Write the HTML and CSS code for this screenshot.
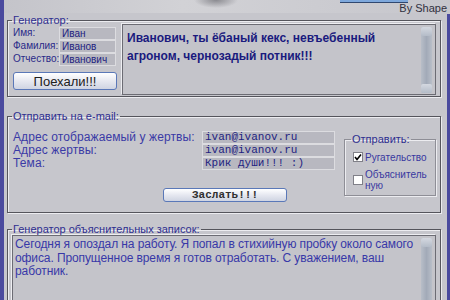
FILE: index.html
```html
<!DOCTYPE html>
<html lang="ru">
<head>
    <meta charset="UTF-8">
    <title>Генератор</title>
    <link rel="stylesheet" href="styles.css">
</head>
<body>
<div class="window">

    <!-- Header strip -->
    <div class="top">
        <div class="tab"></div>
        <div class="by">By Shape</div>
    </div>

    <div class="main">

        <!-- Name generator -->
        <fieldset class="group gen">
            <legend>Генератор:</legend>
            <div class="gen-body">
                <div class="gen-left">
                    <div class="fields">
                        <span class="small-label">Имя:</span><div class="input">Иван</div>
                        <span class="small-label">Фамилия:</span><div class="input">Иванов</div>
                        <span class="small-label">Отчество:</span><div class="input">Иванович</div>
                    </div>
                    <button class="btn btn-go">Поехали!!!</button>
                </div>
                <div class="memo">
                    <div class="memo-text bold-text">Иванович, ты ёбаный кекс, невъебенный<br>агроном, чернозадый потник!!!</div>
                    <div class="scroll"><span class="arrow"></span><span class="arrow"></span></div>
                </div>
            </div>
        </fieldset>

        <!-- Send by e-mail -->
        <fieldset class="group mail">
            <legend>Отправить на e-mail:</legend>
            <div class="mail-body">
                <div class="mail-left">
                    <div class="mail-fields">
                        <span class="big-label">Адрес отображаемый у жертвы:</span><div class="input mono">ivan@ivanov.ru</div>
                        <span class="big-label">Адрес жертвы:</span><div class="input mono">ivan@ivanov.ru</div>
                        <span class="big-label">Тема:</span><div class="input mono">Крик души!!! :)</div>
                    </div>
                    <button class="btn btn-send">Заслать!!!</button>
                </div>
                <fieldset class="group sub">
                    <legend>Отправить:</legend>
                    <div class="opt first">
                        <span class="box"><svg width="8" height="8" viewBox="0 0 8 8"><path d="M1 4 L3 6.5 L7 1.5" fill="none" stroke="#000" stroke-width="1.6"/></svg></span>
                        <span>Ругательство</span>
                    </div>
                    <div class="opt">
                        <span class="box"></span>
                        <span>Объяснитель<br>ную</span>
                    </div>
                </fieldset>
            </div>
        </fieldset>

        <!-- Excuse note generator -->
        <fieldset class="group notes">
            <legend>Генератор объяснительных записок:</legend>
            <div class="memo memo-notes">
                <div class="memo-text notes-text">Сегодня я опоздал на работу. Я попал в стихийную пробку около самого<br>офиса. Пропущенное время я готов отработать. С уважением, ваш<br>работник.</div>
                <div class="scroll"><span class="arrow"></span><span class="arrow"></span></div>
            </div>
        </fieldset>

    </div>
</div>
</body>
</html>
```

FILE: styles.css
```css
/* Page */
body {
    margin: 0;
    background-color: #c6c6cc;
    font-family: "Liberation Sans", Arial, sans-serif;
}

/* Window frame */
.window {
    width: 450px;
    height: 300px;
    box-sizing: border-box;
    border-left: 4px solid #4a4a9e;
    overflow: hidden;
}

/* Header strip */
.top {
    height: 13px;
    background: radial-gradient(ellipse 22px 8px at 212px 0, #8a8a90, transparent),
                linear-gradient(90deg, #c4c4ca, #d2d2d6 40%, #c6c6cc);
}

.tab {
    width: 68px;
    height: 2px;
    margin-left: 336px;
    background-color: #7ea8dc;
    border-bottom: 1px solid #304870;
}

.by {
    padding-right: 3px;
    font-size: 11px;
    line-height: 10px;
    color: #303040;
    text-align: right;
}

.main {
    border-right: 3px solid #4a4a9e;
    height: 287px;
}

/* Group boxes */
.group {
    margin: 0 6px 0 3px;
    padding: 0 4px;
    border: 1px solid #55555c;
    box-shadow: inset 1px 1px 0 #ececf0, 1px 1px 0 #ececf0;
    min-width: 0;
}

.group legend {
    padding: 0 1px;
    font-size: 11px;
    line-height: 12px;
    color: #2e2e90;
}

/* Generator */
.gen {
    margin-top: 1px;
    padding: 1px 4px 1px;
}

.gen-body {
    display: flex;
    gap: 5px;
}

.gen-left {
    width: 105px;
    flex: none;
}

.fields {
    display: grid;
    grid-template-columns: 47px 57px;
    grid-auto-rows: 13px;
}

.small-label {
    font-size: 10px;
    line-height: 11px;
    color: #2a2a88;
    padding-left: 1px;
}

.input {
    background-color: #b8b8c0;
    border: 1px solid #dcdce0;
    box-sizing: border-box;
    font-size: 10px;
    line-height: 11px;
    color: #1e1e80;
    padding-left: 2px;
    white-space: nowrap;
    overflow: hidden;
}

.input.mono {
    font-family: "Liberation Mono", monospace;
    font-size: 11px;
}

/* Buttons */
.btn {
    display: block;
    padding: 0;
    background: linear-gradient(#ffffff, #e6e8f0 50%, #cfd4e2);
    border: 1px solid #5a78b8;
    border-radius: 3px;
    color: #202020;
}

.btn-go {
    margin: 6px 0 0 1px;
    width: 104px;
    height: 18px;
    font: 13px "Liberation Sans", Arial, sans-serif;
}

.btn-send {
    margin: 18px 0 0 151px;
    width: 124px;
    height: 14px;
    font: bold 11px "Liberation Mono", monospace;
    line-height: 12px;
    color: #303030;
}

/* Text areas */
.memo {
    flex: 1;
    display: flex;
    margin-top: -3px;
    height: 71px;
    box-sizing: border-box;
    background-color: #c4c4ca;
    border: 1px solid #6c6c74;
    box-shadow: -1px -1px 0 #eeeef2;
}

.memo-text {
    flex: 1;
}

.bold-text {
    padding: 4px 4px;
    font-weight: bold;
    font-size: 12px;
    line-height: 18px;
    color: #1a1a7e;
}

.scroll {
    width: 11px;
    margin: 2px 3px 1px 0;
    display: flex;
    flex-direction: column;
    justify-content: space-between;
    background: linear-gradient(90deg, #b8bec8, #a2aab8, #b8bec8);
    border-radius: 2px;
}

.arrow {
    height: 9px;
    background: linear-gradient(#d4d8e0, #b4bcc8);
    border-radius: 2px;
}

/* E-mail */
.mail {
    margin-top: 13px;
    padding: 9px 4px 10px;
}

.mail-body {
    display: flex;
    align-items: flex-start;
    gap: 9px;
}

.mail-left {
    width: 323px;
    flex: none;
}

.mail-fields {
    display: grid;
    grid-template-columns: 190px 133px;
    grid-auto-rows: 13px;
}

.big-label {
    font-size: 12px;
    line-height: 13px;
    letter-spacing: 0.1px;
    color: #3a3aa6;
    padding-left: 1px;
    white-space: nowrap;
}

/* Send options */
.sub {
    width: 92px;
    height: 63px;
    box-sizing: border-box;
    margin: 2px 0 0;
    padding: 0 2px 0 8px;
    border-color: #8e8e96;
}

.sub legend {
    margin-left: -2px;
}

.opt {
    display: flex;
    align-items: center;
    gap: 2px;
    font-size: 10px;
    line-height: 11px;
    color: #3838a0;
}

.opt.first {
    margin: 5px 0 5px;
    height: 14px;
}

.box {
    width: 10px;
    height: 10px;
    box-sizing: border-box;
    flex: none;
    display: flex;
    align-items: center;
    justify-content: center;
    background-color: #ffffff;
    border: 1px solid #808088;
}

/* Excuse notes */
.notes {
    margin-top: 10px;
}

.memo-notes {
    margin-top: 0;
    height: 80px;
}

.notes-text {
    padding: 2px 2px;
    font-size: 12px;
    line-height: 13.5px;
    letter-spacing: -0.1px;
    color: #3838a8;
    white-space: nowrap;
}
```
